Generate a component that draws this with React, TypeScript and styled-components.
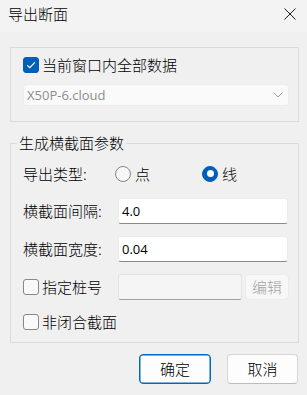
import React from "react";
import styled, { createGlobalStyle } from "styled-components";

const Global = createGlobalStyle`
  html, body { margin: 0; padding: 0; background: #f0f0f0; }
  body {
    font-family: "Noto Sans CJK SC", "Noto Sans", sans-serif;
    font-weight: 300;
    color: #1a1a1a;
    -webkit-font-smoothing: antialiased;
  }
  * { box-sizing: border-box; }
  button { font-weight: 300; }
`;

const Dialog = styled.div`
  width: 307px;
  height: 395px;
  background: #f0f0f0;
  display: flex;
  flex-direction: column;
`;

const TitleBar = styled.div`
  height: 32px;
  padding: 0 11px 4px 8px;
  background: #f3f3f3;
  display: flex;
  align-items: center;
  justify-content: space-between;
`;

const Title = styled.span`
  font-size: 15px;
  line-height: 20px;
  color: #000;
`;

const CloseBtn = styled.button`
  width: 12px;
  height: 12px;
  padding: 0;
  border: none;
  background: transparent;
  display: flex;
`;

const Body = styled.div`
  padding: 0 8px 0 10px;
  display: flex;
  flex-direction: column;
`;

const GroupBox = styled.div`
  margin-top: 15px;
  border: 1px solid #dadada;
  padding: 7px 9px 15px 12px;
  display: flex;
  flex-direction: column;
  gap: 9px;
`;

const FieldSet = styled.fieldset`
  margin: 11px 0 0 0;
  border: 1px solid #dadada;
  padding: 0 9px 10px 12px;
  min-width: 0;
`;

const Legend = styled.legend`
  font-size: 15px;
  line-height: 20px;
  padding: 0 2px;
  margin-left: -6px;
  color: #000;
`;

const Form = styled.div`
  margin-top: 8px;
  display: flex;
  flex-direction: column;
  gap: 12px;
`;

const Row = styled.div<{ $h?: number }>`
  height: ${(p) => p.$h ?? 26}px;
  display: flex;
  align-items: center;
`;

const Label = styled.span<{ $w: number }>`
  width: ${(p) => p.$w}px;
  flex: none;
  font-size: 15px;
  line-height: 20px;
  color: #000;
  white-space: nowrap;
`;

const CheckLabel = styled.label<{ $w?: number }>`
  display: flex;
  align-items: center;
  gap: 3px;
  font-size: 15px;
  line-height: 20px;
  color: #000;
  ${(p) => (p.$w ? `width: ${p.$w}px; flex: none;` : "")}
`;

const Box = styled.span<{ $checked?: boolean }>`
  width: 16px;
  height: 16px;
  border-radius: 3px;
  flex: none;
  display: flex;
  align-items: center;
  justify-content: center;
  background: ${(p) => (p.$checked ? "#005fb8" : "#f9f9f9")};
  border: 1px solid ${(p) => (p.$checked ? "#005fb8" : "#878787")};
`;

const Combo = styled.div`
  height: 22px;
  background: #fafafa;
  border: 1px solid #ececec;
  border-radius: 3px;
  display: flex;
  align-items: center;
  justify-content: space-between;
  padding: 0 5px 0 3px;
  font-family: "Open Sans", "Noto Sans", sans-serif;
  font-weight: 400;
  font-size: 13px;
  color: #8c8c8c;
`;

const RadioOption = styled.label<{ $w?: number }>`
  display: flex;
  align-items: center;
  gap: 4px;
  font-size: 15px;
  line-height: 20px;
  color: #000;
  ${(p) => (p.$w ? `width: ${p.$w}px; flex: none;` : "")}
`;

const RadioDot = styled.span<{ $checked?: boolean }>`
  width: 16px;
  height: 16px;
  border-radius: 50%;
  flex: none;
  display: flex;
  align-items: center;
  justify-content: center;
  background: ${(p) => (p.$checked ? "#005fb8" : "#f7f7f7")};
  border: 1px solid ${(p) => (p.$checked ? "#005fb8" : "#858585")};
  &::after {
    content: "";
    display: ${(p) => (p.$checked ? "block" : "none")};
    width: 7px;
    height: 7px;
    border-radius: 50%;
    background: #fff;
  }
`;

const Input = styled.div<{ $w: number; $disabled?: boolean }>`
  width: ${(p) => p.$w}px;
  height: 26px;
  flex: none;
  background: ${(p) => (p.$disabled ? "#f5f5f5" : "#fff")};
  border: 1px solid ${(p) => (p.$disabled ? "#e3e3e3" : "#ececec")};
  border-bottom-color: ${(p) => (p.$disabled ? "#a0a0a0" : "#8a8a8a")};
  border-radius: 3px;
  display: flex;
  align-items: center;
  padding: 0 3px 1px;
  font-family: "Open Sans", "Noto Sans", sans-serif;
  font-weight: 400;
  font-size: 13px;
  color: #000;
`;

const EditBtn = styled.button`
  margin-left: 3px;
  width: 49px;
  height: 26px;
  border: 1px solid #ebebeb;
  border-radius: 4px;
  background: #f7f7f7;
  font-family: "Noto Sans CJK SC", sans-serif;
  font-size: 15px;
  line-height: 20px;
  color: #a3a3a3;
  padding: 0;
`;

const Footer = styled.div`
  margin-top: 11px;
  display: flex;
  justify-content: flex-end;
  gap: 16px;
  padding-right: 1px;
`;

const DlgButton = styled.button<{ $primary?: boolean; $w: number }>`
  width: ${(p) => p.$w}px;
  height: 30px;
  padding: 0;
  border-radius: 4px;
  background: #fdfdfd;
  border: 1px solid ${(p) => (p.$primary ? "#0067c0" : "#d5d5d5")};
  border-bottom-color: ${(p) => (p.$primary ? "#0067c0" : "#bdbdbd")};
  ${(p) => (p.$primary ? "box-shadow: inset 0 0 0 0.5px #0067c0;" : "")}
  font-family: "Noto Sans CJK SC", sans-serif;
  font-size: 15px;
  line-height: 20px;
  color: #000;
`;

const Check = () => (
  <svg width="10" height="8" viewBox="0 0 10 8">
    <path d="M1.2 4.2 L3.8 6.6 L8.8 1.4" fill="none" stroke="#fff" strokeWidth="1.2" />
  </svg>
);

export default function App() {
  return (
    <>
      <Global />
      <Dialog>
        <TitleBar>
          <Title>导出断面</Title>
          <CloseBtn aria-label="关闭">
            <svg width="12" height="12" viewBox="0 0 12 12">
              <path d="M0.5 0.5 L11.5 11.5 M11.5 0.5 L0.5 11.5" stroke="#1a1a1a" strokeWidth="1" />
            </svg>
          </CloseBtn>
        </TitleBar>
        <Body>
          <GroupBox>
            <Row $h={20}>
              <CheckLabel>
                <Box $checked>
                  <Check />
                </Box>
                当前窗口内全部数据
              </CheckLabel>
            </Row>
            <Combo>
              <span>X50P-6.cloud</span>
              <svg width="10" height="6" viewBox="0 0 10 6">
                <path d="M0.5 0.5 L5 5 L9.5 0.5" fill="none" stroke="#a0a0a0" strokeWidth="1" />
              </svg>
            </Combo>
          </GroupBox>
          <FieldSet>
            <Legend>生成横截面参数</Legend>
            <Form>
              <Row $h={25}>
                <Label $w={92}>导出类型:</Label>
                <RadioOption $w={87}>
                  <RadioDot />点
                </RadioOption>
                <RadioOption>
                  <RadioDot $checked />线
                </RadioOption>
              </Row>
              <Row>
                <Label $w={95}>横截面间隔:</Label>
                <Input $w={170}>4.0</Input>
              </Row>
              <Row>
                <Label $w={95}>横截面宽度:</Label>
                <Input $w={170}>0.04</Input>
              </Row>
              <Row>
                <CheckLabel $w={95}>
                  <Box />
                  指定桩号
                </CheckLabel>
                <Input $w={124} $disabled />
                <EditBtn disabled>编辑</EditBtn>
              </Row>
              <Row $h={20}>
                <CheckLabel>
                  <Box />
                  非闭合截面
                </CheckLabel>
              </Row>
            </Form>
          </FieldSet>
          <Footer>
            <DlgButton $primary $w={72}>确定</DlgButton>
            <DlgButton $w={71}>取消</DlgButton>
          </Footer>
        </Body>
      </Dialog>
    </>
  );
}
